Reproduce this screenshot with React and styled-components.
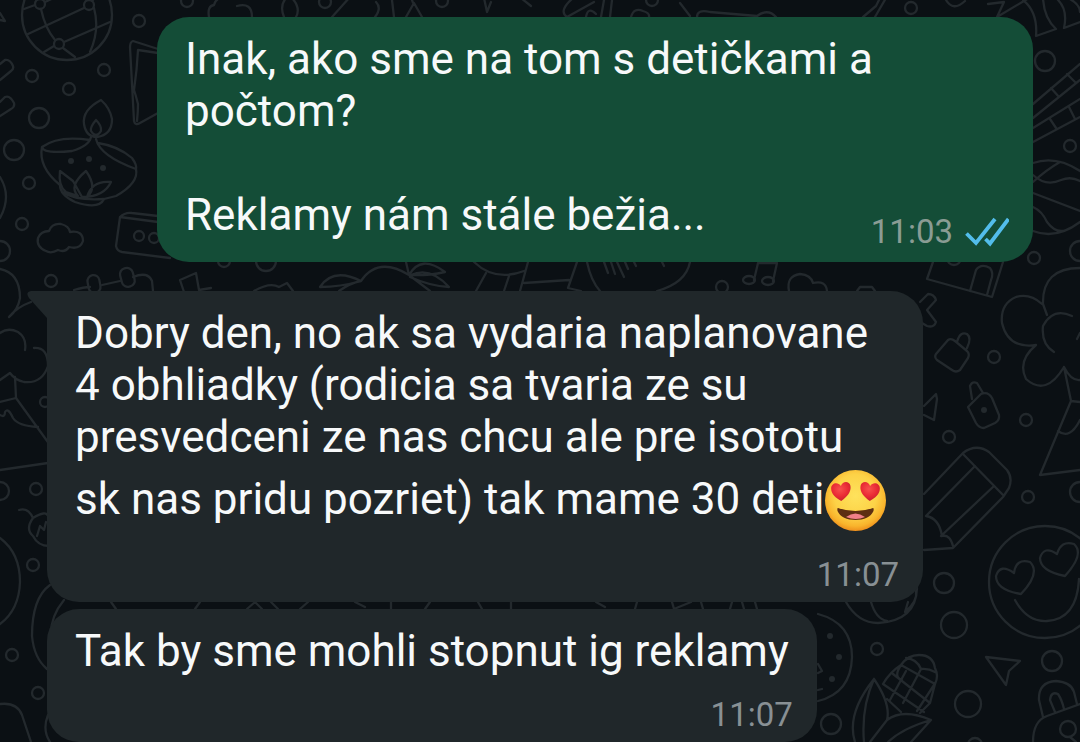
import React from 'react';
import styled, { createGlobalStyle, ThemeProvider } from 'styled-components';

const theme = {
    background: '#0b1014',
    doodle: '#23292d',
    sent: '#144d37',
    received: '#20272a',
    text: '#f7f9fa',
    sentTime: '#8a9c94',
    receivedTime: '#889094',
    read: '#53bdeb',
};

const GlobalStyle = createGlobalStyle`
    * {
        box-sizing: border-box;
    }
    body {
        margin: 0;
        background-color: ${theme.background};
        font-family: Roboto, "Noto Sans", sans-serif;
    }
`;

const ChatStyles = styled.main`
    position: relative;
    min-height: 100vh;
    overflow: hidden;
    padding: 17px 47px 0;
    display: flex;
    flex-direction: column;
    align-items: flex-start;
`;

const Wallpaper = styled.svg`
    position: absolute;
    inset: 0;
    width: 100%;
    height: 100%;
    fill: none;
    stroke: ${(props) => props.theme.doodle};
    stroke-width: 2.3;
    stroke-linecap: round;
    stroke-linejoin: round;
    .dot {
        fill: ${(props) => props.theme.doodle};
        stroke: none;
    }
`;

const Bubble = styled.article`
    position: relative;
    display: grid;
    max-width: calc(100% - 110px);
    padding: 16px 28px ${(props) => (props.$sent ? '10px' : '7px')};
    margin-top: ${(props) => props.$gap || 0}px;
    align-self: ${(props) => (props.$sent ? 'flex-end' : 'flex-start')};
    border-radius: 32px;
    border-top-left-radius: ${(props) => (props.$tail ? '0' : '32px')};
    background-color: ${(props) =>
        props.$sent ? props.theme.sent : props.theme.received};
`;

const Tail = styled.svg`
    position: absolute;
    top: 0;
    right: 100%;
    width: 20px;
    height: 28px;
    fill: ${(props) => props.theme.received};
`;

const Text = styled.p`
    grid-area: 1 / 1;
    margin: 0 0 ${(props) => (props.$overlap ? '11px' : '0')};
    color: ${(props) => props.theme.text};
    font-size: 44px;
    line-height: 52px;
    white-space: pre-line;
`;

const Meta = styled.footer`
    grid-area: ${(props) => (props.$overlap ? '1 / 1' : '2 / 1')};
    align-self: end;
    justify-self: end;
    display: flex;
    align-items: center;
    gap: 12px;
    margin-top: 18px;
    margin-right: -4px;
    color: ${(props) =>
        props.$overlap ? props.theme.sentTime : props.theme.receivedTime};
    font-size: 33px;
    line-height: 40px;
`;

const TicksIcon = styled.svg`
    width: 44px;
    height: 30px;
    fill: none;
    stroke: ${(props) => props.theme.read};
    stroke-width: 3.8;
`;

const EmojiIcon = styled.svg`
    width: 62px;
    height: 64px;
    margin: 6px 0 4px;
    vertical-align: -23px;
`;

const Ticks = () => (
    <TicksIcon viewBox="0 0 44 30" role="img" aria-label="Prečítané">
        <path d="M1.5 16.5 11 26 30 2" />
        <path d="M20.5 22 25 26.5 43.500 2" />
    </TicksIcon>
);

const HeartEyes = () => (
    <EmojiIcon viewBox="0 0 62 64" role="img" aria-label="😍">
        <defs>
            <radialGradient id="face" cx="50%" cy="42%" r="58%">
                <stop offset="0" stopColor="#fee25c" />
                <stop offset="0.6" stopColor="#fdd247" />
                <stop offset="0.86" stopColor="#f9b42c" />
                <stop offset="1" stopColor="#ee8f1c" />
            </radialGradient>
            <radialGradient id="heart" cx="45%" cy="35%" r="65%">
                <stop offset="0" stopColor="#f8504d" />
                <stop offset="0.6" stopColor="#ea2b35" />
                <stop offset="1" stopColor="#c81f30" />
            </radialGradient>
        </defs>
        <circle cx="31.500" cy="31.500" r="30.500" fill="url(#face)" />
        <path
            d="M16 32C11 28 7 24 7.500 18.500C8 13 15 12 17.500 17C20 12 26.500 13 27 18C27.500 24 22 29 16 32Z"
            transform="rotate(-7 17 22)"
            fill="url(#heart)"
        />
        <path
            d="M47 32C52 28 56 24 55.500 18.500C55 13 48 12 45.500 17C43 12 36.500 13 36 18C35.500 24 41 29 47 32Z"
            transform="rotate(7 46 22)"
            fill="url(#heart)"
        />
        <path
            d="M14 39Q31.500 45 49 39Q50 39 49.500 42C47 48 40 51 31.500 51C23 51 16 48 13.500 42Q13 39 14 39Z"
            fill="#5d2e12"
        />
        <path d="M22 48Q31.500 41 41 48Q32 52 22 48Z" fill="#ef7f88" />
    </EmojiIcon>
);

// [cx, cy, r]
const circles = [
    [187, 1, 6], [139, 21, 6], [104, 70, 6], [32, 76, 6], [69, 89, 6],
    [39, 118, 10], [14, 150, 10], [29, 183, 6], [22, 224, 6], [0, 251, 10],
    [51, 281, 6], [139, 236, 5], [154, 238, 5], [224, 261, 6], [266, 261, 10],
    [722, 287, 6], [325, 2, 6], [442, 1, 6], [652, 0, 6], [911, 8, 6],
    [1045, 61, 10], [1070, 146, 6], [1034, 258, 6], [1080, 251, 10],
    [954, 258, 7], [994, 357, 6], [1026, 420, 6], [949, 437, 6],
    [1028, 497, 6], [1080, 492, 10], [944, 583, 10], [954, 625, 13],
    [877, 649, 6], [968, 704, 13], [1052, 661, 10], [831, 724, 10],
    [36, 489, 6], [0, 491, 9], [33, 565, 6], [12, 655, 6], [38, 693, 6],
    [45, 402, 5], [975, 745, 7],
];

const dots = [
    [71, 161, 3], [89, 159, 3], [103, 168, 3], [984, 410, 3],
    [830, 636, 3], [839, 657, 3], [832, 679, 3],
];

const Doodles = () => (
    <Wallpaper
        viewBox="0 0 1080 742"
        preserveAspectRatio="xMinYMin slice"
        aria-hidden="true"
    >
        {circles.map(([cx, cy, r]) => (
            <circle key={`${cx}-${cy}`} cx={cx} cy={cy} r={r} />
        ))}
        {dots.map(([cx, cy, r]) => (
            <circle key={`${cx}-${cy}`} className="dot" cx={cx} cy={cy} r={r} />
        ))}

        {/* globe */}
        <circle cx="67" cy="15" r="45" />
        <circle cx="40" cy="4" r="5" />
        <circle cx="89" cy="5" r="5" />
        <circle cx="59" cy="44" r="5" />
        <path d="M24 9 35 5M45 2 62-6M41 9Q45 28 55 40M28 34 84 8M94 8Q100 30 90 52M44 52 54 46M64 42 110 22M63 48 75 57M92 1 98-6" />

        {/* edge shapes */}
        <path d="M0 13 5 21 0 20M0 64 5 60Q10 59 13 66Q14 69 11 71L0 80M0 102 5 97Q10 95 14 103Q15 107 11 109L0 116M0 177Q12 196 0 218" />
        <path d="M0 269Q20 273 20 298Q18 310 9 317Q17 307 31 302M0 333Q8 327 18 332Q27 338 25 350M34 348Q48 347 48 366Q42 384 24 382Q15 380 10 373L0 380M15 377 16 398 0 402M16 398 50 445M0 415Q5 418 5 412Q8 407 13 418Q18 426 38 427M0 470 48 463" />
        <path d="M19 510Q28 507 33 518Q46 510 48 516M33 518Q25 529 33 536Q38 546 49 546M37 536 40 526 44 530 46 522M0 538Q20 553 20 582Q19 610 0 624M50 585Q32 598 32 636Q34 658 47 669M64 600Q49 618 51 640M0 704Q17 702 22 715L31 742M48 715Q42 730 50 742" />

        {/* envelope */}
        <path d="M158 49 133 41Q130 42 130 47L134 121Q135 126 140 123L158 113M158 53 138 50Q137 70 134 90Q136 96 138 104Q138 112 137 121" />

        {/* diya lamp */}
        <path d="M101 100Q82 110 84 124Q86 137 97 137Q112 135 112 119Q110 108 101 100ZM96 120Q90 127 91 131Q96 139 101 131Q102 126 96 120" />
        <path d="M96 139Q100 156 136 169Q139 183 116 196L104 199Q99 210 75 202Q60 195 60 185Q38 167 42 147Q58 135 90 140M42 147Q43 154 72 151Q89 146 91 137M98 143Q118 146 132 158Q137 165 136 169" />
        <path d="M73 181 60 171Q58 186 66 192L78 196Q68 186 86 171Q98 188 87 197Q92 180 111 182Q104 197 82 197ZM62 192Q76 201 104 199" />

        {/* cloud and radio */}
        <path d="M46 251Q36 247 38 238Q41 231 49 231Q52 223 61 224Q69 226 70 232Q83 230 83 241Q80 250 69 247Q65 253 58 250Q51 254 46 251" />
        <path d="M158 222 120 217 116 246Q117 251 122 252L170 258M120 217Q125 212 132 213L158 216" />

        {/* rolled scroll, crown and palms */}
        <path d="M74 290Q84 287 90 287M102 285 120 281M133 277Q148 271 152 281L153 291" />
        <rect x="88" y="275" width="12" height="18" rx="6" transform="rotate(-10 94 284)" />
        <rect x="121" y="268" width="13" height="19" rx="6" transform="rotate(-15 127 278)" />
        <path d="M184 292 180 280 196 273 199 290 211 288M254 291Q270 282 279 287L287 283 293 291" />
        <path d="M320 287Q333 267 361 281Q340 287 320 287M339 291Q350 283 361 281Q378 256 409 275L430 291M406 262 409 275Q421 254 445 272Q426 276 411 275Q430 266 449 287Q430 286 410 277" />
        <path d="M474 262Q495 282 524 271M486 273 476 291M509 276 504 291M528 262 520 291M524 283 569 280M577 262 568 288 581 291M587 262Q591 281 600 291M604 262 608 273M611 262 615 274M617 262 624 277M625 262 628 269M634 262 636 266M662 262 664 266M690 262Q686 283 657 291" />
        <path d="M754 280 758 263 777 263 773 281" />
        <ellipse cx="749" cy="280" rx="6" ry="4" />
        <ellipse cx="768" cy="281" rx="6" ry="4" />
        <path d="M789 291Q786 276 800 274Q811 275 813 283Q826 280 827 291M857 291 860 287 872 287 875 291" />

        {/* top edge */}
        <path d="M209 17Q207 6 214 5Q215 0 220-2M237 6Q252 2 252 17M284 17Q279 5 287-3M292-2Q301 8 296 17M332 17 350-3M375 17Q382 8 376 2M392 0 394 17M406 17 414 3 422 17M413 3 411-3M484-2 487 12 491 2M521-2 531 6M573-2Q558 11 567 17L594 2M604 0 601 17M612 0 610 17M586 17Q588 6 596 14M631 17Q634 7 643 11Q650 13 649 17M680 3 690 16M697 17Q697 9 710 12L757 16Q768 8 776 17M863 17 876 6 880-2M886-2 875 17M946 0Q953 12 965 1M988 4 1004 2 997 17 1029-2" />

        {/* right edge */}
        <path d="M1023 0Q1038 12 1036 36L1056 29Q1044 18 1043-2M1058 0Q1068 10 1064 28L1080 22M1068-2Q1080 4 1080 12M1033 104 1080 64M1033 118 1080 80M1051 88 1059 97M1067 74 1076 83M1033 128 1080 99M1033 142 1080 117M1050 119 1056 128M1069 107 1075 119" />
        <path d="M1033 163Q1056 155 1080 171M1033 193 1080 211M1033 182Q1046 170 1060 162M1033 175Q1046 187 1061 180Q1071 176 1080 181M1033 207Q1042 211 1047 222Q1056 234 1066 230M1033 231Q1056 240 1080 222" />
        <path d="M933 262 927 279 992 297 1003 262M970 291 976 270Q981 263 990 268Q994 273 991 280L987 295" />
        <path d="M920 302 928 294Q934 294 936 300L927 310 936 322Q934 328 927 326L922 323" />
        <path d="M1080 268Q1042 268 1043 304L1047 315M1042 304Q1030 293 1016 297Q1000 304 1002 323Q1008 349 1036 345Q1017 361 1026 379Q1046 397 1064 367Q1071 381 1080 380M1072 316Q1053 307 1043 326Q1041 344 1054 352M1080 333 1077 339M1064 367 1071 401 1040 475 1080 470M1071 401 1080 402M1058 431Q1070 440 1080 420" />
        <path d="M948 340Q951 338 955 341L967 351Q970 354 968 358L960 370Q956 373 952 370L937 360Q934 357 936 354ZM957 342Q960 331 967 334Q972 338 967 348" />
        <path d="M970 405 981 394Q988 391 992 398L999 415Q1000 420 995 423L984 428Q979 428 976 423L968 407ZM972 399 970 386Q972 381 977 383L983 393M924 406 936 394 937 399 934 420 924 415" />

        {/* pencil */}
        <path d="M924 494 963 453Q976 443 989 452L1007 470Q1013 478 1009 488L1003 497 953 548 924 550M963 454 1003 495M975 466 926 516M994 486 941 536M926 516Q939 518 942 536Q950 534 953 546" />

        {/* face with heart eyes */}
        <circle cx="1045" cy="582" r="56" />
        <path d="M1015 600Q1027 622 1047 621Q1077 619 1079 579" />
        <path d="M1021 594Q996 590 996 576Q1000 563 1014 573Q1016 558 1030 562Q1041 573 1021 594ZM1065 576Q1040 571 1040 558Q1044 545 1057 554Q1061 540 1074 544Q1085 554 1065 576Z" />
        <path d="M986 657 1020 661 1009 671 1006 685Z" />

        {/* padlock */}
        <path d="M1043 717 1039 700Q1038 682 1056 681Q1071 682 1074 692L1077 704M1033 742Q1033 721 1047 716L1080 704M1055 712 1050 700Q1051 691 1058 694Q1062 700 1064 709" />
        <circle cx="1068" cy="729" r="8" />
        <path d="M1070 737 1076 742" />

        {/* corn */}
        <path d="M874 679Q846 714 855 742M874 679Q891 704 887 720L870 742M874 679Q861 708 864 742M887 720Q903 708 931 720L911 742M931 720Q903 728 888 742M883 684Q890 672 901 665Q908 655 919 655Q933 655 935 668Q939 676 935 684L930 703 920 713M901 665 935 684M893 674 930 703M883 684 924 712M887 699 901 712M921 669 903 703M906 658Q917 659 921 669Q928 668 935 672M906 671 890 700M934 685 917 711M901 665Q893 677 902 680" />

        {/* cookie and bowl */}
        <path d="M818 614Q852 623 852 657Q851 693 818 701M818 664 822 671 818 673M818 690 822 689M846 602Q858 623 878 623Q916 621 917 588M871 602Q876 619 887 621M908 602 905 612Q918 601 916 591" />

        {/* strokes between the received messages */}
        <path d="M111 602 116 609M200 602 195 609M247 609 255 602 262 609M271 602 278 609M308 602 300 609M355 602 365 607M391 602V609M430 602 425 609M478 602 482 609M511 602V609M596 602 605 607M637 602 635 609M672 602 674 609 691 602M701 602 703 609M730 609 732 602M742 602 744 609M755 602 757 609" />
    </Wallpaper>
);

const Message = ({ time, sent, tail, gap, children }) => {
    return (
        <Bubble $sent={sent} $tail={tail} $gap={gap}>
            {tail && (
                <Tail viewBox="0 0 20 28" aria-hidden="true">
                    <path d="M20 0H4Q-2 1 2 7L20 27Z" />
                </Tail>
            )}
            <Text $overlap={sent}>{children}</Text>
            <Meta $overlap={sent}>
                <time>{time}</time>
                {sent && <Ticks />}
            </Meta>
        </Bubble>
    );
};

const App = () => {
    return (
        <ThemeProvider theme={theme}>
            <GlobalStyle />
            <ChatStyles>
                <Doodles />
                <Message sent time="11:03">
                    {'Inak, ako sme na tom s detičkami a počtom?\n\nReklamy nám stále bežia...'}
                </Message>
                <Message tail time="11:07" gap={29}>
                    Dobry den, no ak sa vydaria naplanovane 4 obhliadky (rodicia
                    sa tvaria ze su presvedceni ze nas chcu ale pre isototu
                    {'\n'}
                    sk nas pridu pozriet) tak mame 30 deti
                    <HeartEyes />
                </Message>
                <Message time="11:07" gap={7}>
                    Tak by sme mohli stopnut ig reklamy
                </Message>
            </ChatStyles>
        </ThemeProvider>
    );
};

export default App;
